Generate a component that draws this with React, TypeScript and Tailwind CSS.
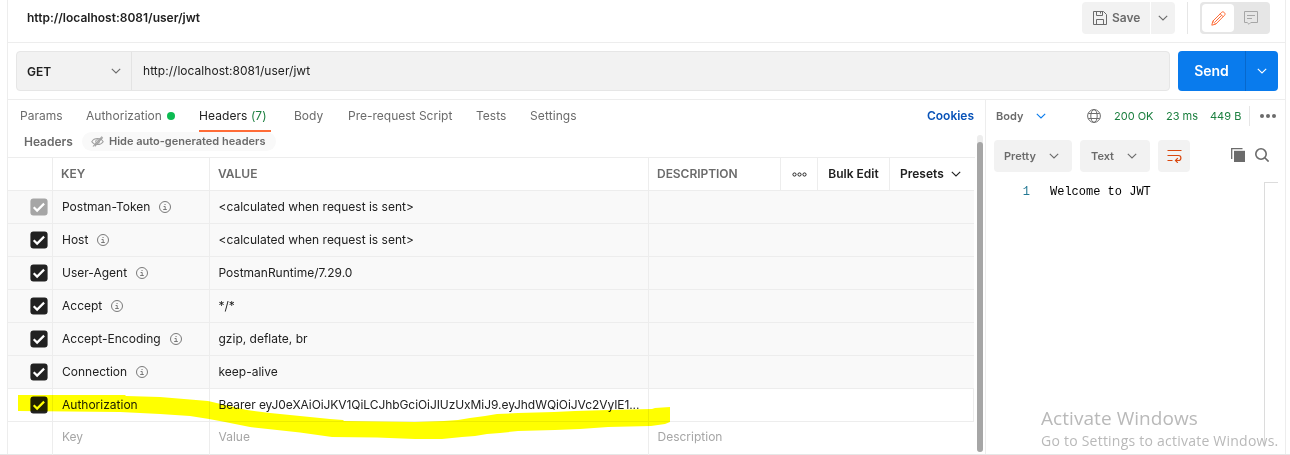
import React from 'react';

const Chevron = ({ className = '' }: { className?: string }) => (
  <svg className={`h-[6px] w-[10px] shrink-0 ${className}`} viewBox="0 0 10 6" fill="none" stroke="currentColor" strokeWidth="1.1">
    <path d="M.8.8 5 5 9.2.8" />
  </svg>
);

const Info = () => (
  <svg className="ml-[9px] h-[12px] w-[12px] shrink-0 text-[#6b6b6b]" viewBox="0 0 12 12" fill="none" stroke="currentColor" strokeWidth=".9">
    <circle cx="6" cy="6" r="5.5" />
    <path d="M4.6 5.5h1.6v3M4.2 8.5h3.6M5.5 3.5h1.1" />
  </svg>
);

const Check = ({ muted }: { muted?: boolean }) => (
  <svg className="h-[18px] w-[18px]" viewBox="0 0 18 18" fill="none">
    <rect x=".4" y=".4" width="17.2" height="17.2" rx="3" fill={muted ? '#a6a6a6' : '#212121'} />
    <path d="m3.7 9.3 3.4 3.3L14.1 5.6" stroke="#fff" strokeWidth="2.2" />
  </svg>
);

const Save = () => (
  <svg className="h-[14px] w-[14px]" viewBox="0 0 14 14" fill="none" stroke="#6b6b6b">
    <path d="M.5.5h10l3 3v10H.5zM3.5.5v4h6v-4M7.5.5v2M3.5 13.5v-5h7v5" />
  </svg>
);

const Pencil = () => (
  <svg className="h-[15px] w-[15px]" viewBox="0 0 15 15" fill="none" stroke="#ff6c37" strokeLinejoin="round">
    <path d="m.8 14.2 1-4L10.7 1.3c1.5-1.5 4.5 1.2 2.9 2.9L4.8 13.1zM9.2 2.8l3 3M1.8 10.2l3 2.9M10.7 4.3l-6.6 6.6" />
  </svg>
);

const Comment = () => (
  <svg className="h-[14px] w-[14px]" viewBox="0 0 14 14" fill="none" stroke="#a6a6a6">
    <path d="M.5.5h13v11H6.8L5 13.3 3.2 11.5H.5zM3 4.5h8M3 7.5h5" />
  </svg>
);

const EyeOff = () => (
  <svg className="h-[11px] w-[13px]" viewBox="0 0 13 11" fill="none" stroke="#a0a0a0" strokeWidth="1.1">
    <path d="M.8 5.7C3.3 1.5 9.7 1.5 12.2 5.7 9.7 9.5 3.3 9.5.8 5.7Z" />
    <circle cx="6.5" cy="5.5" r="1.8" />
    <path d="m2 10.5 9-10M3.8 10.3l8-9" />
  </svg>
);

const Globe = () => (
  <svg className="h-[14px] w-[14px]" viewBox="0 0 14 14" fill="none" stroke="#6b6b6b">
    <circle cx="7" cy="7" r="6.4" />
    <ellipse cx="7" cy="7" rx="3.2" ry="6.4" />
    <path d="M1.3 4.5h11.4M1.3 9.5h11.4" />
  </svg>
);

const Wrap = () => (
  <svg className="h-[14px] w-[15px]" viewBox="0 0 15 14" fill="none" stroke="#d9480f" strokeWidth="1.2">
    <path d="M.5 1.5h14M.5 6.5h11c3.2 0 3.2 5 0 5H8.5M.5 11.5h5M10.8 9.2l-2.3 2.3 2.3 2.3" />
  </svg>
);

const Copy = () => (
  <svg className="h-[14px] w-[14px]" viewBox="0 0 14 14">
    <path d="M3 2.8h11V14H3z" fill="#6b6b6b" />
    <path d="M.7 11V.7h10.8" fill="none" stroke="#6b6b6b" strokeWidth="1.3" />
  </svg>
);

const Search = () => (
  <svg className="h-[14px] w-[14px]" viewBox="0 0 14 14" fill="none" stroke="#6b6b6b" strokeWidth="1.6">
    <circle cx="6" cy="6" r="5.2" />
    <path d="m9.8 9.8 3.8 3.8" />
  </svg>
);

const rows = [
  { key: 'Postman-Token', value: '<calculated when request is sent>', auto: true, muted: true },
  { key: 'Host', value: '<calculated when request is sent>', auto: true },
  { key: 'User-Agent', value: 'PostmanRuntime/7.29.0', auto: true },
  { key: 'Accept', value: '*/*', auto: true },
  { key: 'Accept-Encoding', value: 'gzip, deflate, br', auto: true },
  { key: 'Connection', value: 'keep-alive', auto: true },
  { key: 'Authorization', value: 'Bearer eyJ0eXAiOiJKV1QiLCJhbGciOiJIUzUxMiJ9.eyJhdWQiOiJVc2VyIE1...' },
];

function TitleBar() {
  return (
    <header className="flex h-[43px] border-b border-[#ededed] pl-[19px]">
      <h1 className="mt-[9px] w-[1055px] text-[12px] leading-[18px] font-semibold">http://localhost:8081/user/jwt</h1>
      <div className="mt-[2px] flex h-8 text-[#6b6b6b]">
        <button className="flex w-[68px] items-center gap-[5px] rounded-l bg-[#f2f2f2] pl-[11px] text-[12px] font-semibold"><Save />Save</button>
        <button className="ml-px flex w-6 items-center justify-center rounded-r bg-[#f2f2f2]"><Chevron /></button>
        <div className="ml-3 w-px bg-[#e6e6e6]" />
        <div className="ml-3 flex w-[70px] rounded bg-[#e6e6e6] p-[2px]">
          <span className="flex w-8 items-center justify-center rounded bg-white"><Pencil /></span>
          <span className="flex w-[34px] items-center justify-center"><Comment /></span>
        </div>
      </div>
    </header>
  );
}

function RequestBar() {
  return (
    <div className="flex h-[57px] border-b border-[#ededed] py-2 pl-2">
      <div className="flex h-10 w-[1154px] rounded border border-[#e6e6e6] bg-[#f2f2f2]">
        <div className="flex w-[115px] items-center justify-between border-r border-[#e3e3e3] pr-[10px] pl-[10px]">
          <span className="pt-px text-[12px] font-semibold">GET</span><Chevron className="text-[#6b6b6b]" />
        </div>
        <span className="pl-[11px] text-[12px] leading-[38px] tracking-[0.04px]">http://localhost:8081/user/jwt</span>
      </div>
      <div className="ml-2 flex h-10 w-[100px] rounded bg-[#097bed] text-white">
        <span className="w-[68px] border-r border-[#0768cc] text-center text-[14px] leading-10 font-semibold">Send</span>
        <span className="flex flex-1 items-center justify-center"><Chevron className="text-white" /></span>
      </div>
    </div>
  );
}

function RequestPane() {
  return (
    <section className="h-[354px] w-[967px] shrink-0">
      <nav className="flex h-8 pl-3 text-[12px] leading-8 text-[#6b6b6b]">
        <span className="w-[66px]">Params</span>
        <span className="flex w-[113px] items-center tracking-[0.02px]">Authorization<i className="ml-[5px] h-2 w-2 rounded-full bg-[#0cbb52]" /></span>
        <span className="mr-[23px] w-[72px] border-b-2 border-[#ff6c37] tracking-[0.07px] whitespace-nowrap text-[#212121]">Headers <span className="text-[#1b7f3f]">(7)</span></span>
        <span className="w-[54px]">Body</span>
        <span className="w-[128px]">Pre-request Script</span>
        <span className="w-[54px]">Tests</span>
        <span className="w-[397px] tracking-[0.1px]">Settings</span>
        <span className="font-semibold tracking-[-0.02px] whitespace-nowrap text-[#0953b8]">Cookies</span>
      </nav>
      <div className="flex h-[25px] items-start pl-4 text-[#6b6b6b]">
        <span className="w-[58px] text-[12px] leading-5 font-semibold tracking-[-0.02px]">Headers</span>
        <span className="flex h-[19px] w-[194px] items-center gap-[5px] rounded-full bg-[#f9f9f9] pl-[9px] text-[11px] font-semibold whitespace-nowrap"><EyeOff />Hide auto-generated headers</span>
      </div>
      <div className="border-t border-[#ededed]">
        <div className="mr-px grid h-[33px] grid-cols-[45px_157px_439px_132px_37px_72px_84px] border-b border-[#ededed] text-[12px] leading-8 font-semibold text-[#6b6b6b]">
          <span className="border-r border-[#ededed]" />
          <span className="border-r border-[#ededed] pl-2">KEY</span>
          <span className="border-r border-[#ededed] pl-2">VALUE</span>
          <span className="border-r border-[#ededed] pl-2 tracking-[-0.04px]">DESCRIPTION</span>
          <span className="flex items-center justify-center border-r border-[#ededed]">
            <svg className="h-[5px] w-[15px]" viewBox="0 0 15 5" fill="none" stroke="#212121"><circle cx="2.5" cy="2.5" r="1.6" /><circle cx="7.5" cy="2.5" r="1.6" /><circle cx="12.5" cy="2.5" r="1.6" /></svg>
          </span>
          <span className="border-r border-[#ededed] text-center text-[#212121]">Bulk Edit</span>
          <span className="flex items-center gap-[7px] pl-[10px] text-[#212121]">Presets<Chevron /></span>
        </div>
        {rows.map((r) => (
          <div key={r.key} className={`mr-px grid h-[33px] grid-cols-[45px_157px_439px_324px] border-b border-[#ededed] text-[12px] leading-8 ${r.auto ? 'bg-[#f9f9f9]' : 'border-r bg-white'}`}>
            <span className="flex items-center justify-end border-r border-[#ededed] pr-1"><Check muted={r.muted} /></span>
            <span className="flex items-center border-r border-[#ededed] pl-[9px]">{r.key}{r.auto && <Info />}</span>
            <span className={`border-r border-[#ededed] pl-[8.5px] whitespace-nowrap ${r.auto ? '' : 'tracking-[-0.07px]'}`}>{r.value}</span>
            <span />
          </div>
        ))}
        <div className="grid h-[33px] grid-cols-[45px_157px_439px_325px] text-[12px] leading-[30px] text-[#a6a6a6]">
          <span className="border-r border-[#ededed]" />
          <span className="border-r border-[#ededed] pl-[9px]">Key</span>
          <span className="border-r border-[#ededed] pl-[8.5px]">Value</span>
          <span className="pl-[8.5px]">Description</span>
        </div>
      </div>
    </section>
  );
}

function ResponsePane() {
  return (
    <section className="h-[354px] w-[300px] border-l border-[#ededed]">
      <div className="flex h-8 items-center pl-[10px] text-[11px] text-[#6b6b6b]">
        <span className="w-10 font-semibold">Body</span>
        <span className="w-[51px]"><Chevron className="text-[#097bed]" /></span>
        <Globe />
        <div className="ml-[13px] flex whitespace-nowrap text-[#1b7f3f]">
          <span className="w-[52px]">200 OK</span><span className="w-11">23 ms</span><span className="w-[39px]">449 B</span>
        </div>
        <i className="h-5 w-px bg-[#e6e6e6]" />
        <svg className="ml-[10px] h-1 w-4" viewBox="0 0 16 4" fill="#6b6b6b"><circle cx="2" cy="2" r="2" /><circle cx="8" cy="2" r="2" /><circle cx="14" cy="2" r="2" /></svg>
      </div>
      <div className="mt-2 flex h-8 pl-2 text-[11px] font-semibold text-[#6b6b6b]">
        <span className="flex w-[78px] items-center justify-between rounded bg-[#f2f2f2] pr-[13px] pl-[10px]">Pretty<Chevron /></span>
        <span className="ml-2 flex w-[70px] items-center justify-between rounded bg-[#f2f2f2] pr-[13px] pl-[11px]">Text<Chevron /></span>
        <span className="ml-2 flex w-8 items-center justify-center rounded bg-[#f2f2f2]"><Wrap /></span>
        <span className="ml-[41px] pt-2"><Copy /></span>
        <span className="ml-[10px] pt-2"><Search /></span>
      </div>
      <div className="mt-[10px] flex h-[265px]">
        <span className="w-[44px] pt-[2px] text-right font-['Liberation_Mono',monospace] text-[12px] leading-[17px] text-[#237893]">1</span>
        <code className="w-[234px] pt-[2px] pl-[20px] font-['Liberation_Mono',monospace] text-[12px] leading-[17px] text-black">Welcome to JWT</code>
        <i className="w-[14px] border-t border-l border-[#dcdcdc]" />
      </div>
    </section>
  );
}

export default function App() {
  return (
    <main className="relative h-[455px] w-[1290px] overflow-hidden bg-white pl-[7px] font-['Inter',sans-serif] text-[#212121]">
      <div className="h-[454px] w-[1279px] border-x border-[#ededed]">
        <TitleBar />
        <RequestBar />
        <div className="flex">
          <RequestPane />
          <div className="flex w-[10px] shrink-0 justify-start pt-[35px] pl-[2px]">
            <div className="h-[317px] w-[6px] rounded-full bg-[#ededed] pt-[7px]"><div className="h-[310px] rounded-full bg-[#a6a6a6]" /></div>
          </div>
          <ResponsePane />
        </div>
      </div>
      <div className="-ml-[7px] h-px bg-[#e6e6e6]" />
      <svg className="pointer-events-none absolute inset-0 mix-blend-multiply" width="1290" height="455" viewBox="0 0 1290 455">
        <path fill="#ff0" d="M18 395H125L126 396 160 397 190 399.5 208 401 225 405 247 410 270 413 300 416 330 419 343 420 344 421 415 422 444 421 458 420 470 418 485 416 497 414 518 413 554 412 575 411 608 410 652 409 655 408 670 407V422L665 424 651 426 608 427 580 429 555 430 518 431 500 433 487 434 475 436 462 437 442 439H415L377 437.5 332 437 300 432.5 250 427 225 422 209 419 190 416 160 414 120 412 18 411Z" />
      </svg>
      <div className="pointer-events-none absolute top-[406px] left-[1041px] font-['Open_Sans',sans-serif] whitespace-nowrap text-[#b9b9b9]">
        <p className="text-[19px] leading-[25px] tracking-[0.06px]">Activate Windows</p>
        <p className="text-[14px] leading-[19px] tracking-[0.23px]">Go to Settings to activate Windows.</p>
      </div>
    </main>
  );
}
